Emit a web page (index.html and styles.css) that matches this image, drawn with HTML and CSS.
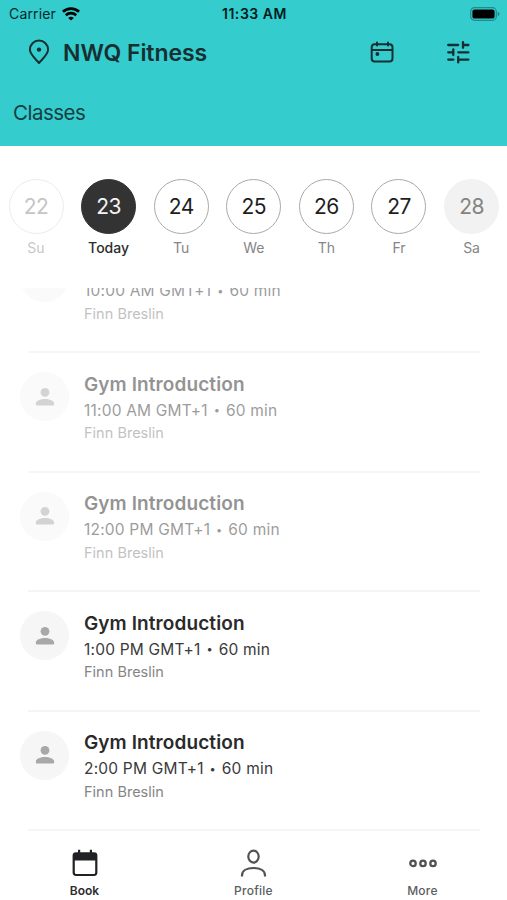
FILE: index.html
```html
<!DOCTYPE html>
<html lang="en">
<head>
<meta charset="utf-8">
<title>NWQ Fitness</title>
<link rel="stylesheet" href="styles.css">
</head>
<body>
<svg class="defs" width="0" height="0">
  <symbol id="person" viewBox="0 0 20 20"><circle cx="10" cy="5.3" r="4.4"/><path d="M.8 18.5v-1.8c0-3.1 5-4.7 9.2-4.7s9.2 1.6 9.2 4.7v.6q0 1.2-1.2 1.2H2q-1.2 0-1.2-1.2z"/></symbol>
</svg>
<header class="header">
  <div class="status">
    <div class="carrier"><span>Carrier</span>
      <svg class="wifi" width="18" height="14" viewBox="0 0 18 14" fill="none" stroke="#000" stroke-width="2.7"><path d="M.9 4.8a11.7 11.7 0 0 1 16.2 0"/><path d="M3.8 8.2a7.5 7.5 0 0 1 10.4 0"/><path d="M9 13.6 6.2 10.9a4.2 4.2 0 0 1 5.6 0z" fill="#000" stroke="none"/></svg>
    </div>
    <div class="clock">11:33 AM</div>
    <svg class="battery" width="30" height="14" viewBox="0 0 30 14"><rect x=".7" y=".7" width="25.6" height="12.6" rx="3.8" fill="none" stroke="#23898a" stroke-width="1.2"/><rect x="2.4" y="2.4" width="22.2" height="9.2" rx="2.2"/><path d="M27.6 4.7q2 .8 2 2.3t-2 2.3z" fill="#23898a"/></svg>
  </div>
  <div class="titlebar">
    <svg class="pin" width="22" height="26" viewBox="0 0 22 26" fill="none" stroke="#172f31" stroke-width="2"><path d="M11 24C7 19.5 1.9 15.4 1.9 10.6a9.1 9.1 0 0 1 18.2 0C20.1 15.4 15 19.5 11 24z" stroke-linejoin="round"/><circle cx="11" cy="10.6" r="2.2" fill="#172f31" stroke="none"/></svg>
    <h1 class="club">NWQ Fitness</h1>
    <svg class="cal" width="24" height="22" viewBox="0 0 24 22" fill="none" stroke="#172f31" stroke-width="2"><rect x="1.7" y="3.2" width="20.8" height="17.4" rx="3"/><path d="M1.7 9h20.8M7 .8v4.4M18 .8v4.4"/><circle cx="7.4" cy="13" r="1.9" fill="#172f31" stroke="none"/></svg>
    <svg class="tune" width="24" height="24" viewBox="0 0 24 24" fill="none" stroke="#172f31" stroke-width="2.3" stroke-linecap="round"><path d="M2.2 5h10M17 5h5.4M17 2.2v5.6M2.2 12.3h5M7.3 9.5v5.6M12.3 12.3h10.1M2.2 19.6h5.2M12.2 19.6h10.2M12.2 16.8v5.6"/></svg>
  </div>
  <h2 class="section">Classes</h2>
</header>
<nav class="days">
  <div class="day past"><span class="num">22</span><span class="name">Su</span></div>
  <div class="day today"><span class="num">23</span><span class="name">Today</span></div>
  <div class="day"><span class="num">24</span><span class="name">Tu</span></div>
  <div class="day"><span class="num">25</span><span class="name">We</span></div>
  <div class="day"><span class="num">26</span><span class="name">Th</span></div>
  <div class="day"><span class="num">27</span><span class="name">Fr</span></div>
  <div class="day closed"><span class="num">28</span><span class="name">Sa</span></div>
</nav>
<main class="list">
  <article class="row over"><div class="avatar"><svg width="20" height="20"><use href="#person"/></svg></div><div class="info"><h3>Gym Introduction</h3><p class="time">10:00 AM GMT+1 <span class="dot">•</span> 60 min</p><p class="coach">Finn Breslin</p></div></article>
  <article class="row over"><div class="avatar"><svg width="20" height="20"><use href="#person"/></svg></div><div class="info"><h3>Gym Introduction</h3><p class="time">11:00 AM GMT+1 <span class="dot">•</span> 60 min</p><p class="coach">Finn Breslin</p></div></article>
  <article class="row over"><div class="avatar"><svg width="20" height="20"><use href="#person"/></svg></div><div class="info"><h3>Gym Introduction</h3><p class="time">12:00 PM GMT+1 <span class="dot">•</span> 60 min</p><p class="coach">Finn Breslin</p></div></article>
  <article class="row"><div class="avatar"><svg width="20" height="20"><use href="#person"/></svg></div><div class="info"><h3>Gym Introduction</h3><p class="time">1:00 PM GMT+1 <span class="dot">•</span> 60 min</p><p class="coach">Finn Breslin</p></div></article>
  <article class="row"><div class="avatar"><svg width="20" height="20"><use href="#person"/></svg></div><div class="info"><h3>Gym Introduction</h3><p class="time">2:00 PM GMT+1 <span class="dot">•</span> 60 min</p><p class="coach">Finn Breslin</p></div></article>
</main>
<footer class="tabs">
  <div class="tab active"><svg width="28" height="28" viewBox="0 0 28 28"><path d="M5 3.200h2V.8h2.200v2.400h9.600V.8H21v2.400h2a3.400 3.400 0 0 1 3.400 3.400v17a3.400 3.400 0 0 1-3.400 3.400H5a3.400 3.400 0 0 1-3.400-3.400v-17A3.400 3.400 0 0 1 5 3.200zM3.800 11.400v12.200a1.500 1.500 0 0 0 1.500 1.500h17.400a1.500 1.500 0 0 0 1.500-1.500V11.400z" fill="#202124" fill-rule="evenodd"/></svg><span>Book</span></div>
  <div class="tab"><svg width="28" height="28" viewBox="0 0 28 28" fill="none" stroke="#505255" stroke-width="2.2"><ellipse cx="13.5" cy="7.6" rx="5.2" ry="6"/><path d="M2 27.6v-1.2c0-4.8 5-7.4 11.5-7.4S25 21.6 25 26.4v1.2"/></svg><span>Profile</span></div>
  <div class="tab"><svg width="28" height="28" viewBox="0 0 28 28" fill="none" stroke="#505255" stroke-width="2.3"><circle cx="4" cy="14.4" r="2.7"/><circle cx="14" cy="14.4" r="2.7"/><circle cx="24" cy="14.4" r="2.7"/></svg><span>More</span></div>
</footer>
</body>
</html>
```
FILE: styles.css
```css
* { box-sizing: border-box; margin: 0; padding: 0; }
body {
  width: 507px;
  height: 900px;
  overflow: hidden;
  display: flex;
  flex-direction: column;
  background: #fff;
  color: #2a2a2a;
  font-family: Inter, "Liberation Sans", sans-serif;
}
svg { display: block; flex: none; }
.defs { display: none; }

.header { height: 146px; flex: none; background: #34cccd; }
.status {
  height: 27px;
  padding: 0 7px 0 9px;
  display: grid;
  grid-template-columns: 1fr auto 1fr;
  align-items: center;
  font-size: 14px;
  line-height: 27px;
  color: #07282a;
}
.carrier { display: flex; align-items: center; gap: 6px; }
.carrier span { letter-spacing: 0.15px; }
.clock { color: #001c1d; font-weight: 600; letter-spacing: 0.55px; }
.battery { justify-self: end; }
.titlebar { height: 50px; padding: 0 37px 0 28px; display: flex; align-items: center; color: #172f31; }
.club { margin-left: 13px; margin-right: auto; padding-top: 1px; font-size: 23px; font-weight: 600; line-height: 30px; letter-spacing: -0.05px; }
.cal { margin-right: 52px; }
.section { padding: 21px 13px 0; font-size: 20.5px; line-height: 30px; font-weight: 400; letter-spacing: -0.5px; color: #173e40; }

.days { height: 142px; flex: none; padding: 33px 0 0 8px; display: flex; gap: 16.6px; }
.day { width: 56px; flex: none; display: flex; flex-direction: column; align-items: center; }
.num {
  width: 55px;
  height: 55px;
  border: 1px solid #a9a9a9;
  border-radius: 50%;
  text-align: center;
  font-size: 21px;
  line-height: 53px;
  letter-spacing: -0.6px;
  color: #1e1e1e;
}
.name { margin-top: 4px; font-size: 14px; line-height: 20px; color: #858585; }
.past .num { border-color: #ececec; color: #c5c5c5; }
.past .name { color: #c8c8c8; }
.today .num { background: #333; border-color: #333; color: #f4f4f4; }
.today .name { color: #2d2d2d; font-weight: 500; }
.closed .num { background: #f2f2f2; border-color: #f2f2f2; color: #848484; }

.list { height: 543px; flex: none; overflow: hidden; }
.row {
  height: 119.5px;
  margin: 0 27px 0 28px;
  display: flex;
  border-bottom: 2px solid #f5f5f5;
}
.row:first-child { margin-top: -54.5px; }
.avatar {
  width: 49px;
  height: 49px;
  margin: 19px 15px 0 -8px;
  flex: none;
  display: flex;
  align-items: center;
  justify-content: center;
  border-radius: 50%;
  background: #f6f6f6;
}
.avatar svg { fill: #a8a8a8; }
.info { padding-top: 17.9px; white-space: nowrap; }
.info h3 { font-size: 19px; line-height: 28px; font-weight: 600; letter-spacing: 0.1px; }
.time { font-size: 15.5px; line-height: 24px; letter-spacing: 0.2px; color: #3a3a3a; }
.dot { display: inline-block; width: 9px; line-height: 1; text-align: center; font-size: 11px; vertical-align: 1.5px; }
.coach { margin-top: -0.9px; font-size: 14.5px; line-height: 22px; letter-spacing: 0.02px; color: #858585; }
.over .avatar, .over .info { opacity: 0.5; }

.tabs { height: 69px; flex: none; display: flex; background: #fff; }
.tab { flex: 1; padding-top: 18px; display: flex; flex-direction: column; align-items: center; gap: 5px; font-size: 12px; line-height: 18px; font-weight: 500; letter-spacing: 0.25px; color: #5c5e61; }
.active { color: #2b2c2e; font-weight: 600; letter-spacing: 0; }
```
